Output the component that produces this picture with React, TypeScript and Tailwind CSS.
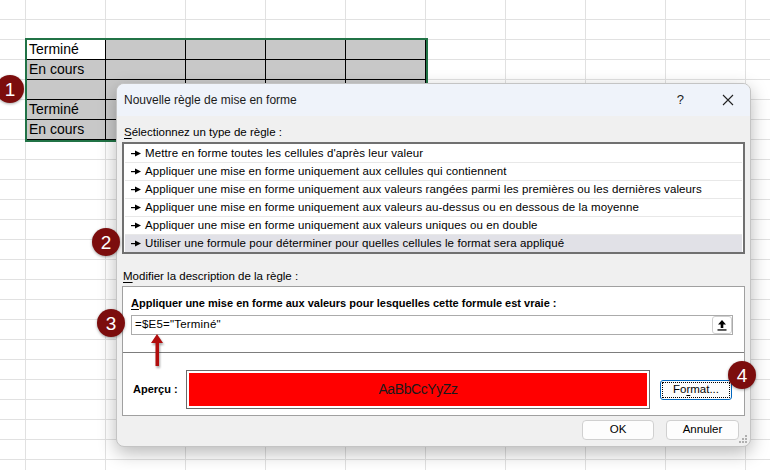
import React from "react";

const ROWS = 24;
const COLS = 11;

const rules = [
  "Mettre en forme toutes les cellules d'après leur valeur",
  "Appliquer une mise en forme uniquement aux cellules qui contiennent",
  "Appliquer une mise en forme uniquement aux valeurs rangées parmi les premières ou les dernières valeurs",
  "Appliquer une mise en forme uniquement aux valeurs au-dessus ou en dessous de la moyenne",
  "Appliquer une mise en forme uniquement aux valeurs uniques ou en double",
  "Utiliser une formule pour déterminer pour quelles cellules le format sera appliqué",
];

const tableText: { [row: number]: string } = {
  2: "Terminé",
  3: "En cours",
  5: "Terminé",
  6: "En cours",
};

function Badge({ n, className }: { n: number; className: string }) {
  return (
    <div
      className={
        "absolute flex h-[28px] w-[28px] items-center justify-center rounded-full bg-[#7c0d0d] text-[19px] leading-none text-white shadow-[0_1px_3px_rgba(0,0,0,0.35)] " +
        className
      }
      style={{ fontFamily: '"Liberation Sans", Arial, sans-serif' }}
    >
      {n}
    </div>
  );
}

function RuleArrow() {
  return (
    <svg width="10" height="7" viewBox="0 0 10 7" className="mr-[4px] shrink-0">
      <rect x="0" y="3" width="5" height="1.2" fill="#000" />
      <path d="M4 0.5 L10 3.5 L4 6.5 Z" fill="#000" />
    </svg>
  );
}

function Sheet() {
  const cells = [];
  for (let r = 0; r < ROWS; r++) {
    for (let c = 0; c < COLS; c++) {
      const inTable = r >= 2 && r <= 6 && c >= 1 && c <= 5;
      const white = r === 2 && c === 1;
      let cls = "h-[20px] border-r border-b ";
      if (inTable) {
        cls += "border-black " + (white ? "bg-white" : "bg-[#c8c8c8]");
      } else {
        cls += "border-[#e1e1e1] bg-white";
      }
      cells.push(
        <div key={r + "-" + c} className={cls}>
          {inTable && c === 1 && tableText[r] ? (
            <span className="block pl-[3px] text-[14px] leading-[19px] text-black">{tableText[r]}</span>
          ) : null}
        </div>
      );
    }
  }
  return (
    <div className="grid grid-cols-[26px_repeat(10,80px)]" style={{ fontFamily: '"Liberation Sans", Arial, sans-serif' }}>
      {cells}
    </div>
  );
}

export default function App() {
  return (
    <div
      className="relative h-[470px] w-[770px] overflow-hidden bg-white"
      style={{ fontFamily: '"Liberation Sans", Arial, sans-serif' }}
    >
      <Sheet />

      {/* selection border */}
      <div className="absolute left-[25px] top-[38px] h-[104px] w-[403px] border-2 border-[#217346]" />

      <Badge n={1} className="left-[-4px] top-[75px]" />

      {/* dialog */}
      <div className="absolute left-[116px] top-[83px] flex h-[364px] w-[635px] flex-col overflow-hidden rounded-[8px] border border-[#c4c4c4] bg-[#f0f0f0] shadow-[0_6px_18px_rgba(0,0,0,0.28)]">
        <div className="flex h-[32px] shrink-0 items-center bg-[#eff3fa] pl-[7px] text-[12px] text-[#1b1b1b]">
          <span>Nouvelle règle de mise en forme</span>
          <span className="ml-auto mr-[38px] text-[13px]">?</span>
          <svg width="12" height="12" viewBox="0 0 12 12" className="mr-[16px]">
            <path d="M1 1 L11 11 M11 1 L1 11" stroke="#222" strokeWidth="1.1" />
          </svg>
        </div>

        <div className="flex flex-1 flex-col px-[5px] text-[11.5px] text-black">
          <div className="mt-[8px] h-[16px] pl-[2px] leading-[16px]">
            <span className="underline underline-offset-2">S</span>électionnez un type de règle :
          </div>
          <div className="mt-[2px] flex h-[112px] flex-col border-2 border-[#707070] bg-white p-[1px]">
            {rules.map((t, i) => (
              <div
                key={i}
                className={
                  "flex h-[18px] items-center pl-[6px] leading-[17px] tracking-[0.1px] " +
                  (i === rules.length - 1 ? "bg-[#e1e1e7]" : "border-b border-[#e8e8e8]")
                }
              >
                <RuleArrow />
                <span>{t}</span>
              </div>
            ))}
          </div>

          <div className="mt-[14px] h-[16px] pl-[1px] leading-[16px]">
            <span className="underline underline-offset-2">M</span>odifier la description de la règle :
          </div>
          <div className="mt-[2px] flex h-[130px] flex-col border border-[#a0a0a0] bg-white">
            <div className="mt-[8px] h-[16px] pl-[8px] text-[11px] font-bold leading-[16px]">
              <span className="underline underline-offset-2">A</span>ppliquer une mise en forme aux valeurs pour lesquelles cette formule est vraie :
            </div>
            <div className="ml-[8px] mr-[11px] mt-[4px] flex h-[20px] items-center border border-[#ababab] bg-white pl-[3px]">
              <span className="text-[11.5px] tracking-[0.2px]">=$E5="Terminé"</span>
              <div className="ml-auto flex h-[18px] w-[20px] items-center justify-center rounded-[3px] border border-[#cfcfcf] bg-white">
                <svg width="10" height="12" viewBox="0 0 10 12">
                  <path d="M5 1 L9 5.5 L6.3 5.5 L6.3 9 L3.7 9 L3.7 5.5 L1 5.5 Z" fill="#000" />
                  <rect x="0.5" y="10.3" width="9" height="1.3" fill="#000" />
                </svg>
              </div>
            </div>
            <div className="mt-[17px] h-px bg-[#7d7d7d]" />
            <div className="mt-[17px] flex items-center">
              <div className="w-[63px] pl-[10px] text-[11px] font-bold">Aperçu :</div>
              <div className="h-[39px] w-[464px] border border-[#6a6a6a] bg-white p-[2px]">
                <div className="flex h-full items-center justify-center bg-[#ff0000] text-[14px] tracking-[-0.4px] text-[#1a1a1a]">
                  AaBbCcYyZz
                </div>
              </div>
              <div className="ml-[10px] flex h-[20px] w-[72px] items-center justify-center rounded-[3px] border border-[#0067c0] bg-[#fdfdfd] p-[1px]">
                <div className="flex h-full w-full items-center justify-center border border-dotted border-black">
                  Fo<span className="underline underline-offset-2">r</span>mat...
                </div>
              </div>
            </div>
          </div>

          <div className="mt-[4px] flex justify-end gap-[12px] pr-[6px]">
            <button className="flex h-[20px] w-[72px] items-center justify-center rounded-[4px] border border-[#d0d0d0] bg-[#fdfdfd]">
              OK
            </button>
            <button className="flex h-[20px] w-[73px] items-center justify-center rounded-[4px] border border-[#d0d0d0] bg-[#fdfdfd]">
              Annuler
            </button>
          </div>
        </div>

        <svg width="8" height="8" viewBox="0 0 8 8" className="absolute bottom-[3px] right-[3px]">
          <rect x="6" y="0" width="2" height="2" fill="#b0b0b0" />
          <rect x="3" y="3" width="2" height="2" fill="#b0b0b0" />
          <rect x="6" y="3" width="2" height="2" fill="#b0b0b0" />
          <rect x="0" y="6" width="2" height="2" fill="#b0b0b0" />
          <rect x="3" y="6" width="2" height="2" fill="#b0b0b0" />
          <rect x="6" y="6" width="2" height="2" fill="#b0b0b0" />
        </svg>
      </div>

      {/* red arrow pointing at $E5 */}
      <svg width="16" height="36" viewBox="0 0 16 36" className="absolute left-[150px] top-[333px] drop-shadow-[1px_2px_1px_rgba(0,0,0,0.35)]">
        <path d="M7 1 L13 10 L9 10 L9 33 L5.5 33 L5.5 10 L1 10 Z" fill="#b10d0d" />
      </svg>

      <Badge n={2} className="left-[92px] top-[228px]" />
      <Badge n={3} className="left-[97px] top-[309px]" />
      <Badge n={4} className="left-[728px] top-[361px]" />
    </div>
  );
}
